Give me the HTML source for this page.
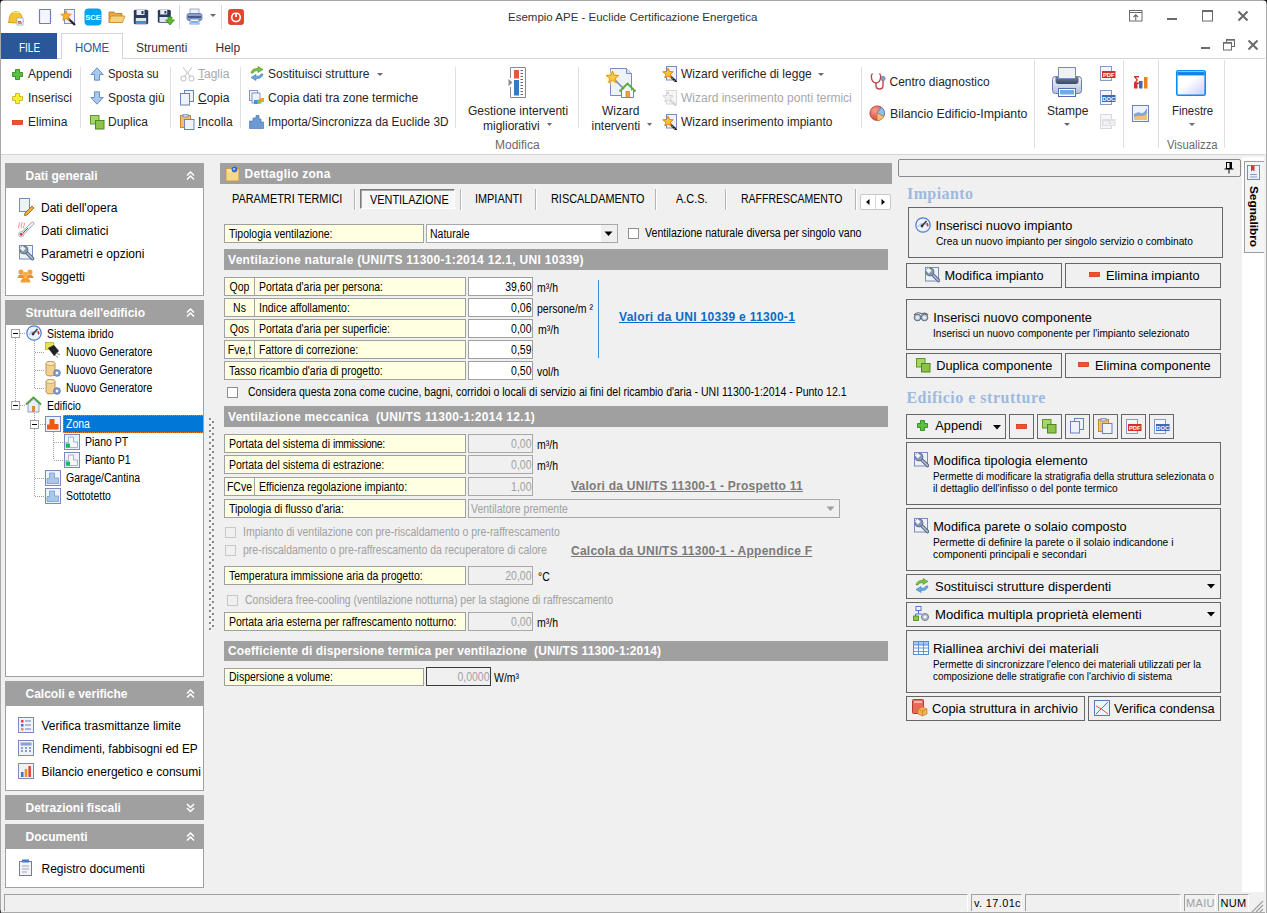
<!DOCTYPE html><html><head><meta charset="utf-8"><style>
html,body{margin:0;padding:0}
body{width:1267px;height:913px;overflow:hidden;position:relative;background:#f0f0f0;font-family:"Liberation Sans",sans-serif}
.a{position:absolute}
.t{white-space:nowrap}
</style></head><body>
<div class="a" style="left:0px;top:0px;width:1267px;height:154px;background:#fff"></div>
<div class="a" style="left:0px;top:0px;width:1267px;height:1px;background:#a8a8a8"></div>
<div class="a" style="left:0px;top:0px;width:1px;height:913px;background:#a8a8a8"></div>
<div class="a" style="left:1266px;top:0px;width:1px;height:913px;background:#a8a8a8"></div>
<svg class="a" style="left:0px;top:0px;" width="4" height="4" viewBox="0 0 4 4"><path d="M0 0H4Q0.5 0.5 0 4Z" fill="#111"/></svg>
<svg class="a" style="left:1263px;top:0px;" width="4" height="4" viewBox="0 0 4 4"><path d="M4 0H0Q3.5 0.5 4 4Z" fill="#111"/></svg>
<svg class="a" style="left:0px;top:909px;" width="4" height="4" viewBox="0 0 4 4"><path d="M0 4H4Q0.5 3.5 0 0Z" fill="#333"/></svg>
<svg class="a" style="left:7px;top:9px;" width="18" height="17" viewBox="0 0 18 17"><path d="M2 12 Q2 3 9 2.5 Q15 3 15.5 11 L16.5 12.5 Q9 15 1 13.5Z" fill="#f4c430" stroke="#c89a10" stroke-width="0.8"/><path d="M6 4 Q9 2 12 4" stroke="#fff2a0" fill="none"/><rect x="10" y="9" width="6" height="7" fill="#fff" stroke="#8aa" stroke-width="0.7"/><path d="M11 14 L15 14" stroke="#d33" stroke-width="1.2"/><path d="M11 12.5 L14 12.5" stroke="#3a3" stroke-width="1"/></svg>
<svg class="a" style="left:38px;top:8px;" width="14" height="17" viewBox="0 0 14 17"><rect x="1.5" y="1.5" width="11" height="14" fill="#f4f6fb" stroke="#6f7fb5" stroke-width="1.2" rx="0.5"/></svg>
<svg class="a" style="left:60px;top:8px;" width="17" height="18" viewBox="0 0 17 18"><rect x="4.5" y="1.5" width="10" height="14" fill="#eef1f8" stroke="#8090c0"/><path d="M7 9.5 L15 17" stroke="#222" stroke-width="2.2"/><path d="M6.00 2.50 L7.47 5.98 L11.23 6.30 L8.38 8.77 L9.23 12.45 L6.00 10.50 L2.77 12.45 L3.62 8.77 L0.77 6.30 L4.53 5.98Z" fill="#f6b233" stroke="#e0801a" stroke-width="0.8"/></svg>
<svg class="a" style="left:84px;top:8px;" width="18" height="18" viewBox="0 0 18 18"><rect x="0.5" y="0.5" width="17" height="17" rx="4" fill="#00a4ef"/><text x="9" y="12.3" font-family="Liberation Sans" font-weight="700" font-size="7.5" fill="#fff" text-anchor="middle">SCE</text></svg>
<svg class="a" style="left:108px;top:10px;" width="18" height="14" viewBox="0 0 18 14"><path d="M1 2 H6 L7.5 3.5 H14 V12.5 H1Z" fill="#e8a640" stroke="#b87420" stroke-width="0.8"/><path d="M3 6 H17 L14.5 12.5 H1Z" fill="#f7d27a" stroke="#c88a30" stroke-width="0.8"/></svg>
<svg class="a" style="left:133px;top:9px;" width="16" height="16" viewBox="0 0 16 16"><rect x="0.8" y="0.8" width="14.4" height="14.4" rx="1.5" fill="#2a3a58"/><rect x="3.5" y="1" width="8" height="5" fill="#e8ecf4"/><rect x="8.5" y="2" width="2" height="3" fill="#2a3a58"/><rect x="2.8" y="9" width="10.4" height="5.5" fill="#dfe6f2"/><rect x="2.8" y="12" width="10.4" height="2.5" fill="#4a8ad0"/></svg>
<svg class="a" style="left:157px;top:9px;" width="18" height="17" viewBox="0 0 18 17"><rect x="0.8" y="0.8" width="13" height="13" rx="1.5" fill="#2a3a58"/><rect x="3.2" y="1" width="7" height="4.5" fill="#e8ecf4"/><rect x="7.5" y="2" width="1.8" height="2.5" fill="#2a3a58"/><rect x="2.5" y="8" width="9.5" height="5" fill="#dfe6f2"/><path d="M11 8 H15 V11 H17.5 L13 16 L8.5 11 H11Z" fill="#5cb832" stroke="#3a8a20" stroke-width="0.7"/></svg>
<div class="a" style="left:179px;top:5px;width:1px;height:24px;background:#dadada"></div>
<svg class="a" style="left:186px;top:8px;" width="17" height="17" viewBox="0 0 17 17"><rect x="4" y="1" width="9" height="5" fill="#eef1f8" stroke="#8a9abf" stroke-width="0.8"/><rect x="1" y="5.5" width="15" height="7" rx="2" fill="#8a9ed0" stroke="#5a6ea0" stroke-width="0.8"/><rect x="2" y="8" width="13" height="2" fill="#48587e"/><rect x="4" y="11" width="9" height="5" fill="#eef3fb" stroke="#6a82b8" stroke-width="0.8"/><rect x="5" y="13" width="7" height="2" fill="#7ab0e8"/></svg>
<svg class="a" style="left:210px;top:14px;" width="6" height="4" viewBox="0 0 6 4"><path d="M0 0 H6 L3 3Z" fill="#6a6a6a"/></svg>
<div class="a" style="left:221px;top:5px;width:1px;height:24px;background:#dadada"></div>
<svg class="a" style="left:228px;top:9px;" width="16" height="16" viewBox="0 0 16 16"><rect x="0.5" y="0.5" width="15" height="15" rx="2" fill="#e8432a" stroke="#c03018" stroke-width="0.7"/><circle cx="8" cy="8.3" r="4.3" fill="none" stroke="#fff" stroke-width="1.6"/><rect x="7.1" y="3" width="1.8" height="5" fill="#fff"/><rect x="6.4" y="2" width="3.2" height="1.6" fill="#e8432a"/></svg>
<div class="a t" style="left:508px;top:10.70px;font-size:11.5px;line-height:13px;color:#333;font-weight:400;font-family:'Liberation Sans', sans-serif;">Esempio APE - Euclide Certificazione Energetica</div>
<svg class="a" style="left:1129px;top:10px;" width="14" height="12" viewBox="0 0 14 12"><rect x="0.5" y="0.5" width="12.5" height="10.5" fill="none" stroke="#6a6a6a"/><path d="M0.5 2.5 H13" stroke="#6a6a6a"/><path d="M6.75 10.5 V5 M4.5 7 L6.75 4.8 L9 7" stroke="#6a6a6a" fill="none" stroke-width="1.1"/></svg>
<div class="a" style="left:1167px;top:18px;width:10px;height:2px;background:#6a6a6a"></div>
<svg class="a" style="left:1202px;top:10px;" width="11" height="12" viewBox="0 0 11 12"><rect x="0.5" y="0.5" width="10" height="10.5" fill="none" stroke="#6a6a6a"/><rect x="0.5" y="0.5" width="10" height="1.5" fill="#6a6a6a"/></svg>
<svg class="a" style="left:1237px;top:10px;" width="12" height="12" viewBox="0 0 12 12"><path d="M1.5 1.5 L10.5 10.5 M10.5 1.5 L1.5 10.5" stroke="#6a6a6a" stroke-width="2"/></svg>
<div class="a" style="left:1201px;top:47px;width:9px;height:2px;background:#6a6a6a"></div>
<svg class="a" style="left:1223px;top:39px;" width="12" height="12" viewBox="0 0 12 12"><rect x="3.5" y="0.5" width="8" height="7" fill="#fff" stroke="#6a6a6a"/><rect x="3.5" y="0.5" width="8" height="1.2" fill="#6a6a6a"/><rect x="0.5" y="3.5" width="8" height="7.5" fill="#fff" stroke="#6a6a6a"/><rect x="0.5" y="3.5" width="8" height="1.2" fill="#6a6a6a"/></svg>
<svg class="a" style="left:1247px;top:39px;" width="12" height="12" viewBox="0 0 12 12"><path d="M1.5 1.5 L10.5 10.5 M10.5 1.5 L1.5 10.5" stroke="#6a6a6a" stroke-width="2"/></svg>
<div class="a" style="left:1px;top:58px;width:1264px;height:1px;background:#d5d5d5"></div>
<div class="a" style="left:1px;top:33px;width:56px;height:26px;background:#2b579a"></div>
<div class="a t" style="left:18.5px;top:41.03px;font-size:12px;line-height:14px;color:#fff;font-weight:400;font-family:'Liberation Sans', sans-serif;transform:scaleX(0.83);transform-origin:0 0;">FILE</div>
<div class="a" style="left:61px;top:33px;width:62px;height:26px;background:#fff;border:1px solid #d5d5d5;border-bottom:none;box-sizing:border-box"></div>
<div class="a t" style="left:75px;top:41.03px;font-size:12px;line-height:14px;color:#2b579a;font-weight:400;font-family:'Liberation Sans', sans-serif;transform:scaleX(0.95);transform-origin:0 0;">HOME</div>
<div class="a t" style="left:136px;top:41.03px;font-size:12px;line-height:14px;color:#333;font-weight:400;font-family:'Liberation Sans', sans-serif;">Strumenti</div>
<div class="a t" style="left:215.5px;top:41.03px;font-size:12px;line-height:14px;color:#333;font-weight:400;font-family:'Liberation Sans', sans-serif;">Help</div>
<div class="a" style="left:1px;top:154px;width:1264px;height:1px;background:#d5d5d5"></div>
<div class="a" style="left:80px;top:67px;width:1px;height:61px;background:#e1e1e1"></div>
<div class="a" style="left:170px;top:67px;width:1px;height:61px;background:#e1e1e1"></div>
<div class="a" style="left:240px;top:67px;width:1px;height:61px;background:#e1e1e1"></div>
<div class="a" style="left:455px;top:67px;width:1px;height:61px;background:#e1e1e1"></div>
<div class="a" style="left:578px;top:67px;width:1px;height:61px;background:#e1e1e1"></div>
<div class="a" style="left:861px;top:67px;width:1px;height:61px;background:#e1e1e1"></div>
<div class="a" style="left:1034px;top:60px;width:1px;height:88px;background:#e1e1e1"></div>
<div class="a" style="left:1123px;top:60px;width:1px;height:88px;background:#e1e1e1"></div>
<div class="a" style="left:1158px;top:60px;width:1px;height:88px;background:#e1e1e1"></div>
<div class="a" style="left:1224px;top:60px;width:1px;height:88px;background:#e1e1e1"></div>
<svg class="a" style="left:12px;top:69px;" width="11" height="11" viewBox="0 0 11 11"><path d="M3.5 0.5 H7.5 V3.5 H10.5 V7.5 H7.5 V10.5 H3.5 V7.5 H0.5 V3.5 H3.5Z" fill="#5ac23a" stroke="#2e8a1e" stroke-width="0.9"/></svg>
<div class="a t" style="left:28px;top:67.03px;font-size:12px;line-height:14px;color:#262626;font-weight:400;font-family:'Liberation Sans', sans-serif;">Appendi</div>
<svg class="a" style="left:12px;top:93px;" width="11" height="11" viewBox="0 0 11 11"><path d="M3.5 0.5 H7.5 V3.5 H10.5 V7.5 H7.5 V10.5 H3.5 V7.5 H0.5 V3.5 H3.5Z" fill="#f8ee30" stroke="#c8b820" stroke-width="0.9"/></svg>
<div class="a t" style="left:28px;top:91.03px;font-size:12px;line-height:14px;color:#262626;font-weight:400;font-family:'Liberation Sans', sans-serif;">Inserisci</div>
<svg class="a" style="left:12px;top:120px;" width="11" height="5" viewBox="0 0 11 5"><rect x="0.5" y="0.5" width="10" height="4" fill="#f0502a" stroke="#d83818" stroke-width="0.8"/></svg>
<div class="a t" style="left:28px;top:115.03px;font-size:12px;line-height:14px;color:#262626;font-weight:400;font-family:'Liberation Sans', sans-serif;">Elimina</div>
<svg class="a" style="left:90px;top:67px;" width="14" height="14" viewBox="0 0 14 14"><path d="M7 0.8 L13.2 7.5 H9.5 V13.2 H4.5 V7.5 H0.8Z" fill="#a8c8ec" stroke="#5a8ac8" stroke-width="0.9"/></svg>
<div class="a t" style="left:108px;top:67.03px;font-size:12px;line-height:14px;color:#262626;font-weight:400;font-family:'Liberation Sans', sans-serif;transform:scaleX(0.95);transform-origin:0 0;">Sposta su</div>
<svg class="a" style="left:90px;top:91px;" width="14" height="14" viewBox="0 0 14 14"><path d="M7 13.2 L13.2 6.5 H9.5 V0.8 H4.5 V6.5 H0.8Z" fill="#a8c8ec" stroke="#5a8ac8" stroke-width="0.9"/></svg>
<div class="a t" style="left:108px;top:91.03px;font-size:12px;line-height:14px;color:#262626;font-weight:400;font-family:'Liberation Sans', sans-serif;">Sposta giù</div>
<svg class="a" style="left:90px;top:115px;" width="15" height="15" viewBox="0 0 15 15"><rect x="0.5" y="0.5" width="8.5" height="8.5" fill="#a8d468" stroke="#5a9a2a"/><rect x="5.5" y="5.5" width="8.5" height="8.5" fill="#8cc24a" stroke="#4a8a1a"/></svg>
<div class="a t" style="left:108px;top:115.03px;font-size:12px;line-height:14px;color:#262626;font-weight:400;font-family:'Liberation Sans', sans-serif;">Duplica</div>
<svg class="a" style="left:180px;top:67px;" width="15" height="15" viewBox="0 0 15 15"><circle cx="3.5" cy="11.5" r="2.5" fill="none" stroke="#c8c8c8" stroke-width="1.1"/><circle cx="11.5" cy="11.5" r="2.5" fill="none" stroke="#c8c8c8" stroke-width="1.1"/><path d="M4.5 9.5 L12 0.5 M10.5 9.5 L3 0.5" stroke="#c8c8c8" stroke-width="1.1"/></svg>
<div class="a t" style="left:198px;top:67.03px;font-size:12px;line-height:14px;color:#a8a8a8;font-weight:400;font-family:'Liberation Sans', sans-serif;"><u>T</u>aglia</div>
<svg class="a" style="left:180px;top:90px;" width="15" height="16" viewBox="0 0 15 16"><rect x="4.5" y="0.5" width="9" height="11" fill="#eef2fa" stroke="#6a82c0"/><rect x="0.5" y="3.5" width="9" height="11.5" fill="#eef2fa" stroke="#6a82c0"/></svg>
<div class="a t" style="left:198px;top:91.03px;font-size:12px;line-height:14px;color:#262626;font-weight:400;font-family:'Liberation Sans', sans-serif;"><u>C</u>opia</div>
<svg class="a" style="left:180px;top:114px;" width="15" height="16" viewBox="0 0 15 16"><rect x="0.5" y="1.5" width="10" height="12" fill="#f0c070" stroke="#c08a30"/><rect x="3" y="0.5" width="5" height="2.5" fill="#d8dce8" stroke="#7a8ab0" stroke-width="0.8"/><rect x="4.5" y="5.5" width="9.5" height="10" fill="#eef2fa" stroke="#6a82c0"/></svg>
<div class="a t" style="left:198px;top:115.03px;font-size:12px;line-height:14px;color:#262626;font-weight:400;font-family:'Liberation Sans', sans-serif;"><u>I</u>ncolla</div>
<svg class="a" style="left:249px;top:66px;" width="16" height="15" viewBox="0 0 16 15"><path d="M2 7 Q3 2 9 2.5 L9 0.5 L14 3.5 L9 6.5 L9 4.5 Q5 4.5 4 7Z" fill="#7ac240" stroke="#4a9020" stroke-width="0.6"/><path d="M14 8 Q13 13 7 12.5 L7 14.5 L2 11.5 L7 8.5 L7 10.5 Q11 10.5 12 8Z" fill="#6aa8e0" stroke="#3a78c0" stroke-width="0.6"/></svg>
<div class="a t" style="left:268px;top:67.03px;font-size:12px;line-height:14px;color:#262626;font-weight:400;font-family:'Liberation Sans', sans-serif;">Sostituisci strutture</div>
<svg class="a" style="left:377px;top:73px;" width="6" height="4" viewBox="0 0 6 4"><path d="M0 0 H6 L3 3Z" fill="#6a6a6a"/></svg>
<svg class="a" style="left:249px;top:90px;" width="16" height="16" viewBox="0 0 16 16"><rect x="0.5" y="0.5" width="8" height="10" fill="#eef2fa" stroke="#7a8ac0" stroke-width="0.9"/><rect x="3" y="3" width="8" height="10" fill="#eef2fa" stroke="#7a8ac0" stroke-width="0.9"/><rect x="5" y="10" width="4" height="4" fill="#4a90e0"/><rect x="8.5" y="9.5" width="4" height="4" fill="#8cc040"/><rect x="11" y="8" width="4" height="4" fill="#f0a030"/></svg>
<div class="a t" style="left:268px;top:91.03px;font-size:12px;line-height:14px;color:#262626;font-weight:400;font-family:'Liberation Sans', sans-serif;">Copia dati tra zone termiche</div>
<svg class="a" style="left:249px;top:114px;" width="15" height="15" viewBox="0 0 15 15"><path d="M0.5 14.5 V7 H4 V4 H7 V1.5 H10 V5 H12 V8 H14.5 V14.5Z" fill="#6a9ad0" stroke="#4a7ab8" stroke-width="0.7"/></svg>
<div class="a t" style="left:268px;top:115.03px;font-size:12px;line-height:14px;color:#262626;font-weight:400;font-family:'Liberation Sans', sans-serif;transform:scaleX(0.98);transform-origin:0 0;">Importa/Sincronizza da Euclide 3D</div>
<svg class="a" style="left:508px;top:66px;" width="20" height="33" viewBox="0 0 20 33"><path d="M2.5 12 V1.5 H17.5 V31.5 H2.5 V21" fill="#fff" stroke="#8a8a8a"/><rect x="6" y="4" width="5" height="8.5" fill="#e05a3a"/><rect x="6" y="14" width="5" height="15.5" fill="#3a78c0"/><path d="M12.5 4.5 H15 M12.5 7.5 H15 M12.5 10.5 H15 M12.5 13.5 H15 M12.5 16.5 H15 M12.5 19.5 H15 M12.5 22.5 H15 M12.5 25.5 H15 M12.5 28.5 H15" stroke="#555" stroke-width="0.9"/><path d="M0.5 13 L4.5 16.5 L0.5 20Z" fill="#8a8a8a"/></svg>
<div class="a t" style="left:468px;top:104.03px;font-size:12px;line-height:14px;color:#262626;font-weight:400;font-family:'Liberation Sans', sans-serif;">Gestione interventi</div>
<div class="a t" style="left:483px;top:118.53px;font-size:12px;line-height:14px;color:#262626;font-weight:400;font-family:'Liberation Sans', sans-serif;">migliorativi</div>
<svg class="a" style="left:547px;top:123px;" width="5" height="3" viewBox="0 0 5 3"><path d="M0 0 H5 L2.5 3Z" fill="#6a6a6a"/></svg>
<svg class="a" style="left:602px;top:66px;" width="36" height="33" viewBox="0 0 36 33"><defs><radialGradient id="glow"><stop offset="0.3" stop-color="#fff3a0" stop-opacity="0.9"/><stop offset="1" stop-color="#fff3a0" stop-opacity="0"/></radialGradient></defs><path d="M8.5 2.5 H24.5 L29.5 7.5 V29.5 H8.5Z" fill="#eef2fa" stroke="#7a8ac0"/><path d="M24.5 2.5 V7.5 H29.5" fill="#dde4f4" stroke="#7a8ac0"/><circle cx="10.5" cy="11.5" r="9" fill="url(#glow)"/><path d="M13 14 L22 23" stroke="#7a8ab8" stroke-width="1.6"/><path d="M10.50 5.00 L12.15 9.23 L16.68 9.49 L13.16 12.37 L14.32 16.76 L10.50 14.30 L6.68 16.76 L7.84 12.37 L4.32 9.49 L8.85 9.23Z" fill="#f8c848" stroke="#e08820" stroke-width="0.9"/><path d="M19.5 24.5 V31.5 H31.5 V24.5" fill="#fff" stroke="#6a82c0"/><path d="M17.5 25.5 L25.5 17.5 L33.5 25.5" fill="none" stroke="#58a838" stroke-width="1.8"/><rect x="24" y="25.5" width="3.5" height="6" fill="#f0a040" stroke="#c07020" stroke-width="0.6"/></svg>
<div class="a t" style="left:602px;top:104.03px;font-size:12px;line-height:14px;color:#262626;font-weight:400;font-family:'Liberation Sans', sans-serif;">Wizard</div>
<div class="a t" style="left:591.5px;top:118.53px;font-size:12px;line-height:14px;color:#262626;font-weight:400;font-family:'Liberation Sans', sans-serif;">interventi</div>
<svg class="a" style="left:647px;top:123px;" width="5" height="3" viewBox="0 0 5 3"><path d="M0 0 H5 L2.5 3Z" fill="#6a6a6a"/></svg>
<svg class="a" style="left:662px;top:66px;" width="16" height="16" viewBox="0 0 16 16"><rect x="4.5" y="0.5" width="10" height="13.5" fill="#eef2fa" stroke="#7a8ac0"/><path d="M7 9 L14.5 16" stroke="#222" stroke-width="2.2"/><path d="M8 10 L9 11 M10 12 L11 13 M12 14 L13 15" stroke="#999" stroke-width="0.8"/><path d="M6.00 2.00 L7.47 5.48 L11.23 5.80 L8.38 8.27 L9.23 11.95 L6.00 10.00 L2.77 11.95 L3.62 8.27 L0.77 5.80 L4.53 5.48Z" fill="#f6c038" stroke="#e07818" stroke-width="0.9"/></svg>
<div class="a t" style="left:681px;top:67.03px;font-size:12px;line-height:14px;color:#262626;font-weight:400;font-family:'Liberation Sans', sans-serif;">Wizard verifiche di legge</div>
<svg class="a" style="left:818px;top:73px;" width="6" height="4" viewBox="0 0 6 4"><path d="M0 0 H6 L3 3Z" fill="#6a6a6a"/></svg>
<svg class="a" style="left:662px;top:90px;" width="16" height="16" viewBox="0 0 16 16"><rect x="4.5" y="0.5" width="10" height="13.5" fill="#f6f6f6" stroke="#dadada"/><path d="M7 9 L14.5 16" stroke="#d4d4d4" stroke-width="2.2"/><path d="M6.00 2.00 L7.47 5.48 L11.23 5.80 L8.38 8.27 L9.23 11.95 L6.00 10.00 L2.77 11.95 L3.62 8.27 L0.77 5.80 L4.53 5.48Z" fill="#f0f0f0" stroke="#d0d0d0" stroke-width="0.9"/></svg>
<div class="a t" style="left:681px;top:91.03px;font-size:12px;line-height:14px;color:#a8a8a8;font-weight:400;font-family:'Liberation Sans', sans-serif;">Wizard inserimento ponti termici</div>
<svg class="a" style="left:662px;top:114px;" width="16" height="16" viewBox="0 0 16 16"><rect x="4.5" y="0.5" width="10" height="13.5" fill="#eef2fa" stroke="#7a8ac0"/><path d="M7 9 L14.5 16" stroke="#222" stroke-width="2.2"/><path d="M8 10 L9 11 M10 12 L11 13 M12 14 L13 15" stroke="#999" stroke-width="0.8"/><path d="M6.00 2.00 L7.47 5.48 L11.23 5.80 L8.38 8.27 L9.23 11.95 L6.00 10.00 L2.77 11.95 L3.62 8.27 L0.77 5.80 L4.53 5.48Z" fill="#f6c038" stroke="#e07818" stroke-width="0.9"/></svg>
<div class="a t" style="left:681px;top:115.03px;font-size:12px;line-height:14px;color:#262626;font-weight:400;font-family:'Liberation Sans', sans-serif;">Wizard inserimento impianto</div>
<svg class="a" style="left:870px;top:73px;" width="17" height="17" viewBox="0 0 17 17"><path d="M2.5 1 Q1 1 1.5 5 Q2 9.5 6 10 Q10 9.5 10.5 5 Q11 1 9.5 1" fill="none" stroke="#c04848" stroke-width="1.4"/><path d="M6 10 V12.5 Q6 16 9.5 16 Q13 16 13 12.5 V7.5" fill="none" stroke="#c04848" stroke-width="1.4"/><circle cx="13" cy="5.5" r="2.2" fill="#8aa0c0" stroke="#5a6a88" stroke-width="0.6"/><circle cx="2.5" cy="1.2" r="0.9" fill="#9ab"/><circle cx="9.5" cy="1.2" r="0.9" fill="#9ab"/></svg>
<div class="a t" style="left:889.5px;top:75.03px;font-size:12px;line-height:14px;color:#262626;font-weight:400;font-family:'Liberation Sans', sans-serif;">Centro diagnostico</div>
<svg class="a" style="left:869px;top:105px;" width="17" height="17" viewBox="0 0 17 17"><defs><radialGradient id="pier" cx="0.35" cy="0.3" r="0.8"><stop offset="0" stop-color="#f4a090"/><stop offset="1" stop-color="#d03a30"/></radialGradient></defs><circle cx="8.2" cy="8.2" r="7.3" fill="url(#pier)" stroke="#b83028" stroke-width="0.8"/><path d="M8.2 8.2 L12.39 2.22 A7.3 7.3 0 0 1 14.82 11.29Z" fill="#8cc0ec" stroke="#3a78c8" stroke-width="0.6"/><path d="M8.2 8.2 L14.82 11.29 A7.3 7.3 0 0 1 8.2 15.5Z" fill="#f4c070" stroke="#c88030" stroke-width="0.6"/></svg>
<div class="a t" style="left:889.5px;top:107.03px;font-size:12px;line-height:14px;color:#262626;font-weight:400;font-family:'Liberation Sans', sans-serif;transform:scaleX(1.025);transform-origin:0 0;">Bilancio Edificio-Impianto</div>
<svg class="a" style="left:1050px;top:66px;" width="34" height="32" viewBox="0 0 34 32"><defs><linearGradient id="pbody" x1="0" y1="0" x2="0" y2="1"><stop offset="0" stop-color="#f4f6fb"/><stop offset="1" stop-color="#b4c0da"/></linearGradient><linearGradient id="pslot" x1="0" y1="0" x2="0" y2="1"><stop offset="0" stop-color="#7a88a8"/><stop offset="1" stop-color="#3a4868"/></linearGradient></defs><rect x="2.5" y="10.5" width="29" height="17" rx="3" fill="url(#pbody)" stroke="#6a7ab0"/><path d="M5.5 10 H28.5 V15 Q28.5 18 25.5 18 H8.5 Q5.5 18 5.5 15Z" fill="url(#pslot)"/><rect x="8.5" y="1.5" width="17" height="11" fill="#eef1f8" stroke="#7a8ac0"/><rect x="8.5" y="22.5" width="17" height="8" fill="#fff" stroke="#5a6aa8"/><rect x="10" y="24" width="14" height="4.5" fill="#6aaee8"/></svg>
<div class="a t" style="left:1047px;top:104.03px;font-size:12px;line-height:14px;color:#262626;font-weight:400;font-family:'Liberation Sans', sans-serif;">Stampe</div>
<svg class="a" style="left:1064px;top:123px;" width="6" height="4" viewBox="0 0 6 4"><path d="M0 0 H6 L3 3Z" fill="#6a6a6a"/></svg>
<svg class="a" style="left:1100px;top:66px;" width="16" height="15" viewBox="0 0 16 15"><rect x="0.5" y="0.5" width="11" height="14" fill="#f4f6fb" stroke="#8a9ac8"/><rect x="2" y="5" width="13.5" height="7" fill="#d03030"/><text x="8.7" y="10.8" font-family="Liberation Sans" font-weight="700" font-size="5.8" fill="#fff" text-anchor="middle">PDF</text></svg>
<svg class="a" style="left:1100px;top:90px;" width="16" height="15" viewBox="0 0 16 15"><rect x="0.5" y="0.5" width="11" height="14" fill="#f4f6fb" stroke="#8a9ac8"/><rect x="2" y="5" width="13.5" height="7" fill="#3a6ab8"/><text x="8.7" y="10.8" font-family="Liberation Sans" font-weight="700" font-size="5.8" fill="#fff" text-anchor="middle">DOC</text></svg>
<svg class="a" style="left:1100px;top:114px;" width="16" height="15" viewBox="0 0 16 15"><rect x="0.5" y="0.5" width="11" height="14" fill="#f4f6fb" stroke="#d8d8d8"/><rect x="2" y="5" width="13.5" height="7" fill="#e0e0e0"/><text x="8.7" y="10.8" font-family="Liberation Sans" font-weight="700" font-size="5.8" fill="#fff" text-anchor="middle">XLS</text></svg>
<svg class="a" style="left:1133px;top:75px;" width="16" height="14" viewBox="0 0 16 14"><path d="M1 1 H6 V2.5 H3 L5 5 L3 7.5 H6 V9 H1 V8 L3.5 5 L1 2 Z" fill="#d03030"/><rect x="1" y="7.5" width="3.5" height="6" fill="#d03030"/><rect x="6" y="6" width="3.5" height="7.5" fill="#3a6ab8"/><rect x="11" y="2" width="3.5" height="11.5" fill="#f0801a"/></svg>
<svg class="a" style="left:1132px;top:105px;" width="17" height="17" viewBox="0 0 17 17"><rect x="0.5" y="0.5" width="16" height="16" fill="#eef2fa" stroke="#6a82b8"/><path d="M2 15 V9 Q6 6 9 8 Q12 9 15 3 V15Z" fill="#7aa8e0"/><path d="M2 15 V12 Q7 10 10 11 Q13 11 15 8 V15Z" fill="#f4c078"/></svg>
<svg class="a" style="left:1176px;top:70px;" width="30" height="26" viewBox="0 0 30 26"><defs><linearGradient id="fwin" x1="0.2" y1="0.2" x2="1" y2="1"><stop offset="0.3" stop-color="#ffffff"/><stop offset="1" stop-color="#cccaff"/></linearGradient></defs><rect x="0.8" y="0.8" width="28.4" height="24.4" rx="1.5" fill="url(#fwin)" stroke="#0a8cf8" stroke-width="1.6"/><rect x="1.5" y="1.8" width="27" height="3.6" fill="#0a84ee"/><path d="M2 1.6 H28" stroke="#9ccaf8" stroke-width="0.8"/></svg>
<div class="a t" style="left:1171.5px;top:104.03px;font-size:12px;line-height:14px;color:#262626;font-weight:400;font-family:'Liberation Sans', sans-serif;transform:scaleX(0.95);transform-origin:0 0;">Finestre</div>
<svg class="a" style="left:1189px;top:123px;" width="6" height="4" viewBox="0 0 6 4"><path d="M0 0 H6 L3 3Z" fill="#6a6a6a"/></svg>
<div class="a t" style="left:495px;top:137.53px;font-size:12px;line-height:14px;color:#6a6a6a;font-weight:400;font-family:'Liberation Sans', sans-serif;">Modifica</div>
<div class="a t" style="left:1166.5px;top:137.53px;font-size:12px;line-height:14px;color:#6a6a6a;font-weight:400;font-family:'Liberation Sans', sans-serif;transform:scaleX(0.94);transform-origin:0 0;">Visualizza</div>
<div class="a" style="left:5px;top:163px;width:199px;height:25px;background:#a0a0a0"></div>
<div class="a t" style="left:25.5px;top:169.03px;font-size:12px;line-height:14px;color:#fff;font-weight:700;font-family:'Liberation Sans', sans-serif;">Dati generali</div>
<svg class="a" style="left:186px;top:171px;" width="9" height="9" viewBox="0 0 9 9"><path d="M1 4.5 L4.5 1 L8 4.5 M1 8.5 L4.5 5 L8 8.5" stroke="#fff" stroke-width="1.5" fill="none"/></svg>
<div class="a" style="left:5px;top:188px;width:199px;height:108px;background:#fff;border:1px solid #a0a0a0;border-top:none;box-sizing:border-box"></div>
<svg class="a" style="left:17px;top:198px;" width="18" height="18" viewBox="0 0 18 18"><rect x="2.5" y="0.5" width="10" height="13" fill="#eef2fa" stroke="#7a8ac0"/><path d="M8 15 L15 8 L17 10 L10 17 L7.5 17.5Z" fill="#f0b040" stroke="#806020" stroke-width="0.8"/></svg>
<div class="a t" style="left:41px;top:201.03px;font-size:12px;line-height:14px;color:#000;font-weight:400;font-family:'Liberation Sans', sans-serif;">Dati dell'opera</div>
<svg class="a" style="left:17px;top:221px;" width="18" height="17" viewBox="0 0 18 17"><path d="M4.5 13.5 L15.5 2.5" stroke="#9aa4b4" stroke-width="3.6" stroke-linecap="round"/><path d="M4.5 13.5 L15.5 2.5" stroke="#f4f4f8" stroke-width="2" stroke-linecap="round"/><path d="M4.5 13.5 L11 7" stroke="#e02838" stroke-width="1"/><circle cx="4.2" cy="13.3" r="2.6" fill="#f4f4f8" stroke="#9aa4b4" stroke-width="0.8"/><circle cx="4.2" cy="13.3" r="1.4" fill="#e02838"/><path d="M2 1.5 Q3 3 2 4.5 Q1 6 2 7.5 M4.5 1 Q5.5 2.5 4.5 4 Q3.5 5.5 4.5 7 M7 1.5 Q8 3 7 4.5 Q6 6 7 7.5" stroke="#f06070" stroke-width="0.7" fill="none"/></svg>
<div class="a t" style="left:41px;top:224.03px;font-size:12px;line-height:14px;color:#000;font-weight:400;font-family:'Liberation Sans', sans-serif;">Dati climatici</div>
<svg class="a" style="left:18px;top:244px;" width="17" height="17" viewBox="0 0 17 17"><rect x="1.5" y="1.5" width="13" height="13.5" fill="#eef2fa" stroke="#7a8ac0"/><path d="M6.5 6.5 L14.5 14.5" stroke="#56667f" stroke-width="3.6" stroke-linecap="round"/><path d="M6.5 6.5 L14.5 14.5" stroke="#b8c6dc" stroke-width="1.5" stroke-linecap="round"/><circle cx="6" cy="6" r="4" fill="#8898b4" stroke="#56667f" stroke-width="0.8"/><path d="M1.8 4.6 L4.6 1.8 L7.6 4.8 L4.8 7.6Z" fill="#eef2fa"/></svg>
<div class="a t" style="left:41px;top:247.03px;font-size:12px;line-height:14px;color:#000;font-weight:400;font-family:'Liberation Sans', sans-serif;">Parametri e opzioni</div>
<svg class="a" style="left:17px;top:268px;" width="17" height="15" viewBox="0 0 17 15"><circle cx="4" cy="4" r="2.5" fill="#f0a040"/><circle cx="13" cy="4" r="2.5" fill="#f0a040"/><path d="M0.5 10 Q1 6.5 4 6.5 Q7 6.5 7.5 10Z" fill="#e89030"/><path d="M9.5 10 Q10 6.5 13 6.5 Q16 6.5 16.5 10Z" fill="#e89030"/><circle cx="8.5" cy="6.5" r="2.8" fill="#f4b050"/><path d="M3.5 14.5 Q4 9.5 8.5 9.5 Q13 9.5 13.5 14.5Z" fill="#f0a030"/></svg>
<div class="a t" style="left:41px;top:270.03px;font-size:12px;line-height:14px;color:#000;font-weight:400;font-family:'Liberation Sans', sans-serif;">Soggetti</div>
<div class="a" style="left:5px;top:300px;width:199px;height:25px;background:#a0a0a0"></div>
<div class="a t" style="left:25.5px;top:306.03px;font-size:12px;line-height:14px;color:#fff;font-weight:700;font-family:'Liberation Sans', sans-serif;">Struttura dell'edificio</div>
<svg class="a" style="left:186px;top:308px;" width="9" height="9" viewBox="0 0 9 9"><path d="M1 4.5 L4.5 1 L8 4.5 M1 8.5 L4.5 5 L8 8.5" stroke="#fff" stroke-width="1.5" fill="none"/></svg>
<div class="a" style="left:5px;top:325px;width:199px;height:352px;background:#fff;border:1px solid #a0a0a0;border-top:none;box-sizing:border-box"></div>
<div class="a" style="left:15px;top:338px;width:1px;height:68px;background:repeating-linear-gradient(to bottom,#a0a0a0 0 1px,transparent 1px 2px)"></div>
<div class="a" style="left:20px;top:333px;width:6px;height:1px;background:repeating-linear-gradient(to right,#a0a0a0 0 1px,transparent 1px 2px)"></div>
<svg class="a" style="left:11px;top:329px;" width="9" height="9" viewBox="0 0 9 9"><rect x="0.5" y="0.5" width="8" height="8" fill="#fff" stroke="#a0a0a0"/><path d="M2 4.5 H7" stroke="#000"/></svg>
<svg class="a" style="left:26px;top:325px;" width="16" height="16" viewBox="0 0 16 16"><circle cx="8" cy="8" r="7.2" fill="#eaf2fc" stroke="#4a7ad0" stroke-width="1.2"/><path d="M3 10 A5.3 5.3 0 0 1 13 10" fill="none" stroke="#9ab8e8" stroke-width="1"/><path d="M7 9 L11.5 4" stroke="#333" stroke-width="1.4"/><circle cx="7" cy="9" r="1.4" fill="#333"/><path d="M12 6 L13 9" stroke="#e03030" stroke-width="1.6"/></svg>
<div class="a t" style="left:46.5px;top:327.03px;font-size:12px;line-height:14px;color:#000;font-weight:400;font-family:'Liberation Sans', sans-serif;transform:scaleX(0.875);transform-origin:0 0;">Sistema ibrido</div>
<div class="a" style="left:34px;top:341px;width:1px;height:47px;background:repeating-linear-gradient(to bottom,#a0a0a0 0 1px,transparent 1px 2px)"></div>
<div class="a" style="left:35px;top:352px;width:10px;height:1px;background:repeating-linear-gradient(to right,#a0a0a0 0 1px,transparent 1px 2px)"></div>
<div class="a" style="left:35px;top:370px;width:10px;height:1px;background:repeating-linear-gradient(to right,#a0a0a0 0 1px,transparent 1px 2px)"></div>
<div class="a" style="left:35px;top:388px;width:10px;height:1px;background:repeating-linear-gradient(to right,#a0a0a0 0 1px,transparent 1px 2px)"></div>
<svg class="a" style="left:45px;top:342px;" width="17" height="16" viewBox="0 0 17 16"><rect x="0.5" y="0.5" width="8" height="7" fill="#e8e050" stroke="#b0a830" stroke-width="0.7"/><path d="M3 6 L9 3 L14 9 L9 14 Z" fill="#222"/><path d="M11 11 L15 13 M10 13 L13 15.5" stroke="#888" stroke-width="1"/></svg>
<div class="a t" style="left:65.5px;top:345.03px;font-size:12px;line-height:14px;color:#000;font-weight:400;font-family:'Liberation Sans', sans-serif;transform:scaleX(0.875);transform-origin:0 0;">Nuovo Generatore</div>
<svg class="a" style="left:45px;top:361px;" width="16" height="16" viewBox="0 0 16 16"><path d="M1 2.5 Q1 0.5 5.5 0.5 Q10 0.5 10 2.5 V13 Q10 15 5.5 15 Q1 15 1 13Z" fill="#f4d090" stroke="#b08040" stroke-width="0.8"/><ellipse cx="5.5" cy="2.5" rx="4.5" ry="2" fill="#fbe8b8" stroke="#b08040" stroke-width="0.6"/><circle cx="12" cy="12" r="3.3" fill="#8aa8d8" stroke="#4a68a8" stroke-width="0.8"/><circle cx="12" cy="12" r="1.2" fill="#fff"/></svg>
<div class="a t" style="left:65.5px;top:363.03px;font-size:12px;line-height:14px;color:#000;font-weight:400;font-family:'Liberation Sans', sans-serif;transform:scaleX(0.875);transform-origin:0 0;">Nuovo Generatore</div>
<svg class="a" style="left:45px;top:379px;" width="16" height="16" viewBox="0 0 16 16"><path d="M1 2.5 Q1 0.5 5.5 0.5 Q10 0.5 10 2.5 V13 Q10 15 5.5 15 Q1 15 1 13Z" fill="#f4d090" stroke="#b08040" stroke-width="0.8"/><ellipse cx="5.5" cy="2.5" rx="4.5" ry="2" fill="#fbe8b8" stroke="#b08040" stroke-width="0.6"/><circle cx="12" cy="12" r="3.3" fill="#8aa8d8" stroke="#4a68a8" stroke-width="0.8"/><circle cx="12" cy="12" r="1.2" fill="#fff"/></svg>
<div class="a t" style="left:65.5px;top:381.03px;font-size:12px;line-height:14px;color:#000;font-weight:400;font-family:'Liberation Sans', sans-serif;transform:scaleX(0.875);transform-origin:0 0;">Nuovo Generatore</div>
<div class="a" style="left:20px;top:405px;width:6px;height:1px;background:repeating-linear-gradient(to right,#a0a0a0 0 1px,transparent 1px 2px)"></div>
<svg class="a" style="left:11px;top:401px;" width="9" height="9" viewBox="0 0 9 9"><rect x="0.5" y="0.5" width="8" height="8" fill="#fff" stroke="#a0a0a0"/><path d="M2 4.5 H7" stroke="#000"/></svg>
<svg class="a" style="left:25px;top:396px;" width="17" height="17" viewBox="0 0 17 17"><path d="M1 8.5 L8.5 1.5 L16 8.5" fill="none" stroke="#4aa030" stroke-width="1.8"/><path d="M3 8 L8.5 3 L14 8 V16 H3Z" fill="#e8eef8" stroke="#7a8ac0" stroke-width="0.8"/><rect x="7" y="10" width="3" height="6" fill="#e88a2a"/></svg>
<div class="a t" style="left:46.5px;top:399.03px;font-size:12px;line-height:14px;color:#000;font-weight:400;font-family:'Liberation Sans', sans-serif;transform:scaleX(0.875);transform-origin:0 0;">Edificio</div>
<div class="a" style="left:34px;top:413px;width:1px;height:83px;background:repeating-linear-gradient(to bottom,#a0a0a0 0 1px,transparent 1px 2px)"></div>
<div class="a" style="left:38px;top:424px;width:7px;height:1px;background:repeating-linear-gradient(to right,#a0a0a0 0 1px,transparent 1px 2px)"></div>
<svg class="a" style="left:30px;top:420px;" width="9" height="9" viewBox="0 0 9 9"><rect x="0.5" y="0.5" width="8" height="8" fill="#fff" stroke="#a0a0a0"/><path d="M2 4.5 H7" stroke="#000"/></svg>
<svg class="a" style="left:45px;top:416px;" width="16" height="16" viewBox="0 0 16 16"><rect x="0.5" y="0.5" width="15" height="15" fill="#eef2fa" stroke="#7a8ac0"/><path d="M2 13.5 V8.5 H4.5 V3 H9.5 V8 H13.5 V13.5Z" fill="#f05a10"/></svg>
<div class="a" style="left:63px;top:415px;width:140px;height:18px;background:#0078d7;border:1px dotted #f08020;border-right:none;box-sizing:border-box"></div>
<div class="a t" style="left:66px;top:417.03px;font-size:12px;line-height:14px;color:#fff;font-weight:400;font-family:'Liberation Sans', sans-serif;transform:scaleX(0.875);transform-origin:0 0;">Zona</div>
<div class="a" style="left:53px;top:432px;width:1px;height:28px;background:repeating-linear-gradient(to bottom,#a0a0a0 0 1px,transparent 1px 2px)"></div>
<div class="a" style="left:54px;top:442px;width:10px;height:1px;background:repeating-linear-gradient(to right,#a0a0a0 0 1px,transparent 1px 2px)"></div>
<div class="a" style="left:54px;top:460px;width:10px;height:1px;background:repeating-linear-gradient(to right,#a0a0a0 0 1px,transparent 1px 2px)"></div>
<svg class="a" style="left:64px;top:434px;" width="16" height="16" viewBox="0 0 16 16"><rect x="0.5" y="0.5" width="15" height="15" fill="#eef2fa" stroke="#7a8ac0"/><path d="M2 13.5 V8.5 H4.5 V3 H9.5 V8 H13.5 V13.5Z" fill="#f4f6fa" stroke="#8a9ac0" stroke-width="0.7"/><rect x="2" y="9.5" width="4" height="4" fill="#10c060"/></svg>
<div class="a t" style="left:84.5px;top:435.03px;font-size:12px;line-height:14px;color:#000;font-weight:400;font-family:'Liberation Sans', sans-serif;transform:scaleX(0.875);transform-origin:0 0;">Piano PT</div>
<svg class="a" style="left:64px;top:452px;" width="16" height="16" viewBox="0 0 16 16"><rect x="0.5" y="0.5" width="15" height="15" fill="#eef2fa" stroke="#7a8ac0"/><path d="M2 13.5 V8.5 H4.5 V3 H9.5 V8 H13.5 V13.5Z" fill="#f4f6fa" stroke="#8a9ac0" stroke-width="0.7"/><rect x="2" y="9.5" width="4" height="4" fill="#10c060"/></svg>
<div class="a t" style="left:84.5px;top:453.03px;font-size:12px;line-height:14px;color:#000;font-weight:400;font-family:'Liberation Sans', sans-serif;transform:scaleX(0.875);transform-origin:0 0;">Pianto P1</div>
<div class="a" style="left:35px;top:478px;width:10px;height:1px;background:repeating-linear-gradient(to right,#a0a0a0 0 1px,transparent 1px 2px)"></div>
<svg class="a" style="left:45px;top:470px;" width="16" height="16" viewBox="0 0 16 16"><rect x="0.5" y="0.5" width="15" height="15" fill="#eef2fa" stroke="#7a8ac0"/><path d="M2 13.5 V8.5 H4.5 V3 H9.5 V8 H13.5 V13.5Z" fill="#a8c8e8" stroke="#6a98c8" stroke-width="0.7"/></svg>
<div class="a t" style="left:65.5px;top:471.03px;font-size:12px;line-height:14px;color:#000;font-weight:400;font-family:'Liberation Sans', sans-serif;transform:scaleX(0.875);transform-origin:0 0;">Garage/Cantina</div>
<div class="a" style="left:35px;top:496px;width:10px;height:1px;background:repeating-linear-gradient(to right,#a0a0a0 0 1px,transparent 1px 2px)"></div>
<svg class="a" style="left:45px;top:488px;" width="16" height="16" viewBox="0 0 16 16"><rect x="0.5" y="0.5" width="15" height="15" fill="#eef2fa" stroke="#7a8ac0"/><path d="M2 13.5 V8.5 H4.5 V3 H9.5 V8 H13.5 V13.5Z" fill="#a8c8e8" stroke="#6a98c8" stroke-width="0.7"/></svg>
<div class="a t" style="left:65.5px;top:489.03px;font-size:12px;line-height:14px;color:#000;font-weight:400;font-family:'Liberation Sans', sans-serif;transform:scaleX(0.875);transform-origin:0 0;">Sottotetto</div>
<svg class="a" style="left:208px;top:417px;" width="7" height="214" viewBox="0 0 7 214"><defs><pattern id="spl" x="0" y="0" width="6" height="6" patternUnits="userSpaceOnUse"><rect x="2" y="2" width="2" height="2" fill="#fff"/><rect x="1" y="1" width="2" height="2" fill="#888"/><rect x="5" y="5" width="2" height="2" fill="#fff"/><rect x="4" y="4" width="2" height="2" fill="#888"/></pattern></defs><rect width="7" height="214" fill="url(#spl)"/></svg>
<div class="a" style="left:5px;top:681px;width:199px;height:25px;background:#a0a0a0"></div>
<div class="a t" style="left:25.5px;top:687.03px;font-size:12px;line-height:14px;color:#fff;font-weight:700;font-family:'Liberation Sans', sans-serif;">Calcoli e verifiche</div>
<svg class="a" style="left:186px;top:689px;" width="9" height="9" viewBox="0 0 9 9"><path d="M1 4.5 L4.5 1 L8 4.5 M1 8.5 L4.5 5 L8 8.5" stroke="#fff" stroke-width="1.5" fill="none"/></svg>
<div class="a" style="left:5px;top:706px;width:199px;height:85px;background:#fff;border:1px solid #a0a0a0;border-top:none;box-sizing:border-box"></div>
<svg class="a" style="left:18px;top:717px;" width="17" height="17" viewBox="0 0 17 17"><rect x="0.5" y="0.5" width="15" height="15" fill="#eef2fa" stroke="#7a8ac0"/><rect x="3" y="3" width="2.5" height="2.5" fill="#e04040"/><rect x="3" y="7" width="2.5" height="2.5" fill="#4070d0"/><rect x="3" y="11" width="2.5" height="2.5" fill="#f09020"/><path d="M7 4 H13 M7 8 H13 M7 12 H13" stroke="#7080b0"/></svg>
<div class="a t" style="left:41.5px;top:719.03px;font-size:12px;line-height:14px;color:#000;font-weight:400;font-family:'Liberation Sans', sans-serif;">Verifica trasmittanze limite</div>
<svg class="a" style="left:18px;top:740px;" width="17" height="17" viewBox="0 0 17 17"><rect x="0.5" y="0.5" width="15" height="15" fill="#eef2fa" stroke="#7a8ac0"/><rect x="2.5" y="2.5" width="11" height="3" fill="#8aa0d0"/><path d="M3 8 H5 M7 8 H9 M11 8 H13 M3 11 H5 M7 11 H9 M11 11 H13" stroke="#6a82c0" stroke-width="1.5"/></svg>
<div class="a t" style="left:41.5px;top:742.03px;font-size:12px;line-height:14px;color:#000;font-weight:400;font-family:'Liberation Sans', sans-serif;transform:scaleX(0.985);transform-origin:0 0;">Rendimenti, fabbisogni ed EP</div>
<svg class="a" style="left:18px;top:763px;" width="17" height="17" viewBox="0 0 17 17"><rect x="0.5" y="0.5" width="15" height="15" fill="#eef2fa" stroke="#7a8ac0"/><rect x="3" y="9" width="2.5" height="5" fill="#4070d0"/><rect x="6.7" y="6" width="2.5" height="8" fill="#f09020"/><rect x="10.4" y="3" width="2.5" height="11" fill="#e04040"/></svg>
<div class="a t" style="left:41.5px;top:765.03px;font-size:12px;line-height:14px;color:#000;font-weight:400;font-family:'Liberation Sans', sans-serif;">Bilancio energetico e consumi</div>
<div class="a" style="left:5px;top:795px;width:199px;height:25px;background:#a0a0a0"></div>
<div class="a t" style="left:25.5px;top:801.03px;font-size:12px;line-height:14px;color:#fff;font-weight:700;font-family:'Liberation Sans', sans-serif;">Detrazioni fiscali</div>
<svg class="a" style="left:186px;top:803px;" width="9" height="9" viewBox="0 0 9 9"><path d="M1 1 L4.5 4.5 L8 1 M1 5 L4.5 8.5 L8 5" stroke="#fff" stroke-width="1.5" fill="none"/></svg>
<div class="a" style="left:5px;top:824px;width:199px;height:25px;background:#a0a0a0"></div>
<div class="a t" style="left:25.5px;top:830.03px;font-size:12px;line-height:14px;color:#fff;font-weight:700;font-family:'Liberation Sans', sans-serif;">Documenti</div>
<svg class="a" style="left:186px;top:832px;" width="9" height="9" viewBox="0 0 9 9"><path d="M1 4.5 L4.5 1 L8 4.5 M1 8.5 L4.5 5 L8 8.5" stroke="#fff" stroke-width="1.5" fill="none"/></svg>
<div class="a" style="left:5px;top:849px;width:199px;height:39px;background:#fff;border:1px solid #a0a0a0;border-top:none;box-sizing:border-box"></div>
<svg class="a" style="left:19px;top:859px;" width="14" height="17" viewBox="0 0 14 17"><rect x="0.5" y="2.5" width="12" height="14" fill="#f4f4f4" stroke="#7a7a8a"/><rect x="3" y="0.5" width="7" height="3" fill="#4a7ad0"/><path d="M3 7 H10 M3 10 H10 M3 13 H8" stroke="#9aa8c0"/></svg>
<div class="a t" style="left:41.5px;top:862.03px;font-size:12px;line-height:14px;color:#000;font-weight:400;font-family:'Liberation Sans', sans-serif;">Registro documenti</div>
<div class="a" style="left:220px;top:163px;width:672px;height:21px;background:#a0a0a0"></div>
<svg class="a" style="left:225px;top:166px;" width="16" height="16" viewBox="0 0 16 16"><rect x="1" y="2.5" width="13" height="12.5" fill="#f8d888" stroke="#c89848" stroke-width="0.9"/><rect x="2" y="3.5" width="11" height="2" fill="#fbe8b0"/><circle cx="9.5" cy="3.5" r="2.6" fill="#3a7ad8" stroke="#1a4aa8" stroke-width="0.6"/><circle cx="9" cy="3" r="0.9" fill="#cfe0ff"/></svg>
<div class="a t" style="left:244.5px;top:167.03px;font-size:12px;line-height:14px;color:#fff;font-weight:700;font-family:'Liberation Sans', sans-serif;letter-spacing:0.3px;">Dettaglio zona</div>
<div class="a t" style="left:231.5px;top:192.03px;font-size:12px;line-height:14px;color:#000;font-weight:400;font-family:'Liberation Sans', sans-serif;transform:scaleX(0.9075);transform-origin:0 0;">PARAMETRI TERMICI</div>
<div class="a" style="left:354px;top:189px;width:1px;height:21px;background:#b4b4b4;box-shadow:1px 0 0 #fff"></div>
<div class="a" style="left:360px;top:189px;width:95px;height:20px;background:#f7f7f7;border:1px solid #fff;border-top-color:#7a7a7a;border-left-color:#7a7a7a;box-sizing:border-box;box-shadow:inset 1px 1px 0 #a8a8a8"></div>
<div class="a t" style="left:370px;top:192.53px;font-size:12px;line-height:14px;color:#000;font-weight:400;font-family:'Liberation Sans', sans-serif;transform:scaleX(0.9075);transform-origin:0 0;">VENTILAZIONE</div>
<div class="a" style="left:460px;top:189px;width:1px;height:21px;background:#b4b4b4;box-shadow:1px 0 0 #fff"></div>
<div class="a t" style="left:475px;top:192.03px;font-size:12px;line-height:14px;color:#000;font-weight:400;font-family:'Liberation Sans', sans-serif;transform:scaleX(0.9075);transform-origin:0 0;">IMPIANTI</div>
<div class="a" style="left:535px;top:189px;width:1px;height:21px;background:#b4b4b4;box-shadow:1px 0 0 #fff"></div>
<div class="a t" style="left:550.5px;top:192.03px;font-size:12px;line-height:14px;color:#000;font-weight:400;font-family:'Liberation Sans', sans-serif;transform:scaleX(0.9075);transform-origin:0 0;">RISCALDAMENTO</div>
<div class="a" style="left:655px;top:189px;width:1px;height:21px;background:#b4b4b4;box-shadow:1px 0 0 #fff"></div>
<div class="a t" style="left:676px;top:192.03px;font-size:12px;line-height:14px;color:#000;font-weight:400;font-family:'Liberation Sans', sans-serif;transform:scaleX(0.9075);transform-origin:0 0;">A.C.S.</div>
<div class="a" style="left:725px;top:189px;width:1px;height:21px;background:#b4b4b4;box-shadow:1px 0 0 #fff"></div>
<div class="a t" style="left:740.5px;top:192.03px;font-size:12px;line-height:14px;color:#000;font-weight:400;font-family:'Liberation Sans', sans-serif;transform:scaleX(0.875);transform-origin:0 0;">RAFFRESCAMENTO</div>
<div class="a" style="left:855px;top:189px;width:1px;height:21px;background:#b4b4b4;box-shadow:1px 0 0 #fff"></div>
<div class="a" style="left:860px;top:194px;width:31px;height:16px;background:#fff;border:1px solid #c8c8c8;box-sizing:border-box;border-radius:2px"></div>
<div class="a" style="left:875px;top:195px;width:1px;height:14px;background:#d8d8d8"></div>
<svg class="a" style="left:864px;top:198px;" width="8" height="8" viewBox="0 0 8 8"><path d="M5.5 1 L2 4 L5.5 7Z" fill="#000"/></svg>
<svg class="a" style="left:879px;top:198px;" width="8" height="8" viewBox="0 0 8 8"><path d="M2.5 1 L6 4 L2.5 7Z" fill="#000"/></svg>
<div class="a" style="left:224px;top:224px;width:200px;height:19px;background:#ffffe1;border:1px solid #a0a0a0;box-sizing:border-box"></div>
<div class="a t" style="left:228.5px;top:227.03px;font-size:12px;line-height:14px;color:#000;font-weight:400;font-family:'Liberation Sans', sans-serif;transform:scaleX(0.875);transform-origin:0 0;">Tipologia ventilazione:</div>
<div class="a" style="left:426px;top:224px;width:192px;height:19px;background:#fff;border:1px solid #a8a8a8;box-sizing:border-box"></div>
<div class="a t" style="left:429.5px;top:227.03px;font-size:12px;line-height:14px;color:#000;font-weight:400;font-family:'Liberation Sans', sans-serif;transform:scaleX(0.875);transform-origin:0 0;">Naturale</div>
<div class="a" style="left:601px;top:225px;width:16px;height:17px;background:#f0f0f0"></div>
<svg class="a" style="left:604px;top:231px;" width="9" height="6" viewBox="0 0 9 6"><path d="M0.5 0.5 H8.5 L4.5 5Z" fill="#000"/></svg>
<div class="a" style="left:628px;top:228px;width:11px;height:11px;background:#fff;border:1px solid #8e8e8e;box-sizing:border-box"></div>
<div class="a t" style="left:645px;top:226.03px;font-size:12px;line-height:14px;color:#000;font-weight:400;font-family:'Liberation Sans', sans-serif;transform:scaleX(0.884);transform-origin:0 0;">Ventilazione naturale diversa per singolo vano</div>
<div class="a" style="left:224px;top:249px;width:664px;height:21px;background:#a0a0a0"></div>
<div class="a t" style="left:228px;top:253.03px;font-size:12px;line-height:14px;color:#fff;font-weight:700;font-family:'Liberation Sans', sans-serif;letter-spacing:0.3px;white-space:pre;">Ventilazione naturale (UNI/TS 11300-1:2014 12.1, UNI 10339)</div>
<div class="a" style="left:224px;top:277px;width:31px;height:19px;background:#ffffe1;border:1px solid #a0a0a0;box-sizing:border-box"></div>
<div class="a" style="left:254px;top:277px;width:212px;height:19px;background:#ffffe1;border:1px solid #a0a0a0;box-sizing:border-box"></div>
<div class="a t" style="left:224px;top:279.73px;width:31px;text-align:center;font-size:12px;line-height:14px;color:#000;transform:scaleX(0.875);transform-origin:50% 0">Qop</div>
<div class="a t" style="left:258.5px;top:280.03px;font-size:12px;line-height:14px;color:#000;font-weight:400;font-family:'Liberation Sans', sans-serif;transform:scaleX(0.875);transform-origin:0 0;">Portata d'aria per persona:</div>
<div class="a" style="left:468px;top:277px;width:65px;height:19px;background:#fff;border:1px solid #a0a0a0;box-sizing:border-box"></div>
<div class="a t" style="left:468px;top:279.73px;width:63.5px;text-align:right;font-size:12px;line-height:14px;color:#000;transform:scaleX(0.875);transform-origin:100% 0">39,60</div>
<div class="a t" style="left:536.5px;top:281.03px;font-size:12px;line-height:14px;color:#000;font-weight:400;font-family:'Liberation Sans', sans-serif;transform:scaleX(0.875);transform-origin:0 0;">m³/h</div>
<div class="a" style="left:224px;top:298px;width:31px;height:19px;background:#ffffe1;border:1px solid #a0a0a0;box-sizing:border-box"></div>
<div class="a" style="left:254px;top:298px;width:212px;height:19px;background:#ffffe1;border:1px solid #a0a0a0;box-sizing:border-box"></div>
<div class="a t" style="left:224px;top:300.73px;width:31px;text-align:center;font-size:12px;line-height:14px;color:#000;transform:scaleX(0.875);transform-origin:50% 0">Ns</div>
<div class="a t" style="left:258.5px;top:301.03px;font-size:12px;line-height:14px;color:#000;font-weight:400;font-family:'Liberation Sans', sans-serif;transform:scaleX(0.875);transform-origin:0 0;">Indice affollamento:</div>
<div class="a" style="left:468px;top:298px;width:65px;height:19px;background:#fff;border:1px solid #a0a0a0;box-sizing:border-box"></div>
<div class="a t" style="left:468px;top:300.73px;width:63.5px;text-align:right;font-size:12px;line-height:14px;color:#000;transform:scaleX(0.875);transform-origin:100% 0">0,06</div>
<div class="a t" style="left:536.5px;top:302.03px;font-size:12px;line-height:14px;color:#000;font-weight:400;font-family:'Liberation Sans', sans-serif;transform:scaleX(0.875);transform-origin:0 0;">persone/m&nbsp;²</div>
<div class="a" style="left:224px;top:319px;width:31px;height:19px;background:#ffffe1;border:1px solid #a0a0a0;box-sizing:border-box"></div>
<div class="a" style="left:254px;top:319px;width:212px;height:19px;background:#ffffe1;border:1px solid #a0a0a0;box-sizing:border-box"></div>
<div class="a t" style="left:224px;top:321.73px;width:31px;text-align:center;font-size:12px;line-height:14px;color:#000;transform:scaleX(0.875);transform-origin:50% 0">Qos</div>
<div class="a t" style="left:258.5px;top:322.03px;font-size:12px;line-height:14px;color:#000;font-weight:400;font-family:'Liberation Sans', sans-serif;transform:scaleX(0.875);transform-origin:0 0;">Portata d'aria per superficie:</div>
<div class="a" style="left:468px;top:319px;width:65px;height:19px;background:#fff;border:1px solid #a0a0a0;box-sizing:border-box"></div>
<div class="a t" style="left:468px;top:321.73px;width:63.5px;text-align:right;font-size:12px;line-height:14px;color:#000;transform:scaleX(0.875);transform-origin:100% 0">0,00</div>
<div class="a t" style="left:537.5px;top:323.03px;font-size:12px;line-height:14px;color:#000;font-weight:400;font-family:'Liberation Sans', sans-serif;transform:scaleX(0.875);transform-origin:0 0;">m³/h</div>
<div class="a" style="left:224px;top:340px;width:31px;height:19px;background:#ffffe1;border:1px solid #a0a0a0;box-sizing:border-box"></div>
<div class="a" style="left:254px;top:340px;width:212px;height:19px;background:#ffffe1;border:1px solid #a0a0a0;box-sizing:border-box"></div>
<div class="a t" style="left:224px;top:342.73px;width:31px;text-align:center;font-size:12px;line-height:14px;color:#000;transform:scaleX(0.875);transform-origin:50% 0">Fve,t</div>
<div class="a t" style="left:258.5px;top:343.03px;font-size:12px;line-height:14px;color:#000;font-weight:400;font-family:'Liberation Sans', sans-serif;transform:scaleX(0.875);transform-origin:0 0;">Fattore di correzione:</div>
<div class="a" style="left:468px;top:340px;width:65px;height:19px;background:#fff;border:1px solid #a0a0a0;box-sizing:border-box"></div>
<div class="a t" style="left:468px;top:342.73px;width:63.5px;text-align:right;font-size:12px;line-height:14px;color:#000;transform:scaleX(0.875);transform-origin:100% 0">0,59</div>
<div class="a" style="left:224px;top:361px;width:242px;height:19px;background:#ffffe1;border:1px solid #a0a0a0;box-sizing:border-box"></div>
<div class="a t" style="left:228.5px;top:364.03px;font-size:12px;line-height:14px;color:#000;font-weight:400;font-family:'Liberation Sans', sans-serif;transform:scaleX(0.875);transform-origin:0 0;">Tasso ricambio d'aria di progetto:</div>
<div class="a" style="left:468px;top:361px;width:65px;height:19px;background:#fff;border:1px solid #a0a0a0;box-sizing:border-box"></div>
<div class="a t" style="left:468px;top:363.73px;width:63.5px;text-align:right;font-size:12px;line-height:14px;color:#000;transform:scaleX(0.875);transform-origin:100% 0">0,50</div>
<div class="a t" style="left:536.5px;top:365.03px;font-size:12px;line-height:14px;color:#000;font-weight:400;font-family:'Liberation Sans', sans-serif;transform:scaleX(0.875);transform-origin:0 0;">vol/h</div>
<div class="a" style="left:598px;top:280px;width:1px;height:78px;background:#3c8ad8"></div>
<div class="a t" style="left:619px;top:309.53px;font-size:12px;line-height:14px;color:#0a6ac8;font-weight:700;font-family:'Liberation Sans', sans-serif;letter-spacing:0.3px;"><u>Valori da UNI 10339 e 11300-1</u></div>
<div class="a" style="left:227px;top:387px;width:11px;height:11px;background:#fff;border:1px solid #8e8e8e;box-sizing:border-box"></div>
<div class="a t" style="left:248px;top:385.03px;font-size:12px;line-height:14px;color:#000;font-weight:400;font-family:'Liberation Sans', sans-serif;transform:scaleX(0.878);transform-origin:0 0;">Considera questa zona come cucine, bagni, corridoi o locali di servizio ai fini del ricambio d'aria - UNI 11300-1:2014 - Punto 12.1</div>
<div class="a" style="left:224px;top:406px;width:664px;height:21px;background:#a0a0a0"></div>
<div class="a t" style="left:228px;top:409.53px;font-size:12px;line-height:14px;color:#fff;font-weight:700;font-family:'Liberation Sans', sans-serif;letter-spacing:0.3px;white-space:pre;">Ventilazione meccanica  (UNI/TS 11300-1:2014 12.1)</div>
<div class="a" style="left:224px;top:434px;width:242px;height:19px;background:#ffffe1;border:1px solid #a0a0a0;box-sizing:border-box"></div>
<div class="a t" style="left:228.5px;top:437.03px;font-size:12px;line-height:14px;color:#000;font-weight:400;font-family:'Liberation Sans', sans-serif;transform:scaleX(0.875);transform-origin:0 0;">Portata del sistema di <span style="letter-spacing:-0.35px">immissione:</span></div>
<div class="a" style="left:468px;top:434px;width:65px;height:19px;background:#f0f0f0;border:1px solid #a8a8a8;box-sizing:border-box"></div>
<div class="a t" style="left:468px;top:436.73px;width:63.5px;text-align:right;font-size:12px;line-height:14px;color:#a0a0a0;transform:scaleX(0.875);transform-origin:100% 0">0,00</div>
<div class="a t" style="left:536.5px;top:438.03px;font-size:12px;line-height:14px;color:#000;font-weight:400;font-family:'Liberation Sans', sans-serif;transform:scaleX(0.875);transform-origin:0 0;">m³/h</div>
<div class="a" style="left:224px;top:455px;width:242px;height:19px;background:#ffffe1;border:1px solid #a0a0a0;box-sizing:border-box"></div>
<div class="a t" style="left:228.5px;top:458.03px;font-size:12px;line-height:14px;color:#000;font-weight:400;font-family:'Liberation Sans', sans-serif;transform:scaleX(0.875);transform-origin:0 0;">Portata del sistema di estrazione:</div>
<div class="a" style="left:468px;top:455px;width:65px;height:19px;background:#f0f0f0;border:1px solid #a8a8a8;box-sizing:border-box"></div>
<div class="a t" style="left:468px;top:457.73px;width:63.5px;text-align:right;font-size:12px;line-height:14px;color:#a0a0a0;transform:scaleX(0.875);transform-origin:100% 0">0,00</div>
<div class="a t" style="left:536.5px;top:459.03px;font-size:12px;line-height:14px;color:#000;font-weight:400;font-family:'Liberation Sans', sans-serif;transform:scaleX(0.875);transform-origin:0 0;">m³/h</div>
<div class="a" style="left:224px;top:477px;width:31px;height:19px;background:#ffffe1;border:1px solid #a0a0a0;box-sizing:border-box"></div>
<div class="a" style="left:254px;top:477px;width:212px;height:19px;background:#ffffe1;border:1px solid #a0a0a0;box-sizing:border-box"></div>
<div class="a t" style="left:224px;top:479.73px;width:31px;text-align:center;font-size:12px;line-height:14px;color:#000;transform:scaleX(0.875);transform-origin:50% 0">FCve</div>
<div class="a t" style="left:258.5px;top:480.03px;font-size:12px;line-height:14px;color:#000;font-weight:400;font-family:'Liberation Sans', sans-serif;transform:scaleX(0.875);transform-origin:0 0;">Efficienza regolazione impianto:</div>
<div class="a" style="left:468px;top:477px;width:65px;height:19px;background:#f0f0f0;border:1px solid #a8a8a8;box-sizing:border-box"></div>
<div class="a t" style="left:468px;top:479.73px;width:63.5px;text-align:right;font-size:12px;line-height:14px;color:#a0a0a0;transform:scaleX(0.875);transform-origin:100% 0">1,00</div>
<div class="a t" style="left:571px;top:478.53px;font-size:12px;line-height:14px;color:#7a7a7a;font-weight:700;font-family:'Liberation Sans', sans-serif;letter-spacing:0.25px;"><u>Valori da UNI/TS 11300-1 - Prospetto 11</u></div>
<div class="a" style="left:224px;top:499px;width:242px;height:19px;background:#ffffe1;border:1px solid #a0a0a0;box-sizing:border-box"></div>
<div class="a t" style="left:228.5px;top:502.03px;font-size:12px;line-height:14px;color:#000;font-weight:400;font-family:'Liberation Sans', sans-serif;transform:scaleX(0.875);transform-origin:0 0;">Tipologia di flusso d'aria:</div>
<div class="a" style="left:468px;top:499px;width:372px;height:19px;background:#f0f0f0;border:1px solid #a8a8a8;box-sizing:border-box"></div>
<div class="a t" style="left:471px;top:502.03px;font-size:12px;line-height:14px;color:#a0a0a0;font-weight:400;font-family:'Liberation Sans', sans-serif;transform:scaleX(0.875);transform-origin:0 0;">Ventilatore premente</div>
<svg class="a" style="left:826px;top:506px;" width="9" height="6" viewBox="0 0 9 6"><path d="M0.5 0.5 H8.5 L4.5 5Z" fill="#a0a0a0"/></svg>
<div class="a" style="left:225px;top:527px;width:11px;height:11px;background:#f0f0f0;border:1px solid #c8c8c8;box-sizing:border-box"></div>
<div class="a t" style="left:242.5px;top:525.03px;font-size:12px;line-height:14px;color:#a0a0a0;font-weight:400;font-family:'Liberation Sans', sans-serif;transform:scaleX(0.875);transform-origin:0 0;">Impianto di ventilazione con pre-riscaldamento o pre-raffrescamento</div>
<div class="a" style="left:225px;top:545px;width:11px;height:11px;background:#f0f0f0;border:1px solid #c8c8c8;box-sizing:border-box"></div>
<div class="a t" style="left:242.5px;top:543.03px;font-size:12px;line-height:14px;color:#a0a0a0;font-weight:400;font-family:'Liberation Sans', sans-serif;transform:scaleX(0.875);transform-origin:0 0;">pre-riscaldamento o pre-raffrescamento da recuperatore di calore</div>
<div class="a t" style="left:571px;top:543.53px;font-size:12px;line-height:14px;color:#7a7a7a;font-weight:700;font-family:'Liberation Sans', sans-serif;letter-spacing:0.25px;"><u>Calcola da UNI/TS 11300-1 - Appendice F</u></div>
<div class="a" style="left:224px;top:566px;width:242px;height:19px;background:#ffffe1;border:1px solid #a0a0a0;box-sizing:border-box"></div>
<div class="a t" style="left:228.5px;top:569.03px;font-size:12px;line-height:14px;color:#000;font-weight:400;font-family:'Liberation Sans', sans-serif;transform:scaleX(0.875);transform-origin:0 0;">Temperatura immissione aria da progetto:</div>
<div class="a" style="left:468px;top:566px;width:65px;height:19px;background:#f0f0f0;border:1px solid #a8a8a8;box-sizing:border-box"></div>
<div class="a t" style="left:468px;top:568.73px;width:63.5px;text-align:right;font-size:12px;line-height:14px;color:#a0a0a0;transform:scaleX(0.875);transform-origin:100% 0">20,00</div>
<div class="a t" style="left:537.5px;top:570.03px;font-size:12px;line-height:14px;color:#000;font-weight:400;font-family:'Liberation Sans', sans-serif;transform:scaleX(0.875);transform-origin:0 0;">°C</div>
<div class="a" style="left:227px;top:595px;width:11px;height:11px;background:#f0f0f0;border:1px solid #c8c8c8;box-sizing:border-box"></div>
<div class="a t" style="left:244.5px;top:593.03px;font-size:12px;line-height:14px;color:#a0a0a0;font-weight:400;font-family:'Liberation Sans', sans-serif;transform:scaleX(0.875);transform-origin:0 0;">Considera free-cooling (ventilazione notturna) per la stagione di raffrescamento</div>
<div class="a" style="left:224px;top:612px;width:242px;height:19px;background:#ffffe1;border:1px solid #a0a0a0;box-sizing:border-box"></div>
<div class="a t" style="left:228.5px;top:615.03px;font-size:12px;line-height:14px;color:#000;font-weight:400;font-family:'Liberation Sans', sans-serif;transform:scaleX(0.875);transform-origin:0 0;">Portata aria esterna per raffrescamento notturno:</div>
<div class="a" style="left:468px;top:612px;width:65px;height:19px;background:#f0f0f0;border:1px solid #a8a8a8;box-sizing:border-box"></div>
<div class="a t" style="left:468px;top:614.73px;width:63.5px;text-align:right;font-size:12px;line-height:14px;color:#a0a0a0;transform:scaleX(0.875);transform-origin:100% 0">0,00</div>
<div class="a t" style="left:536.5px;top:616.03px;font-size:12px;line-height:14px;color:#000;font-weight:400;font-family:'Liberation Sans', sans-serif;transform:scaleX(0.875);transform-origin:0 0;">m³/h</div>
<div class="a" style="left:224px;top:641px;width:664px;height:20px;background:#a0a0a0"></div>
<div class="a t" style="left:228px;top:644.03px;font-size:12px;line-height:14px;color:#fff;font-weight:700;font-family:'Liberation Sans', sans-serif;letter-spacing:0.11px;white-space:pre;">Coefficiente di dispersione termica per ventilazione  (UNI/TS 11300-1:2014)</div>
<div class="a" style="left:224px;top:668px;width:200px;height:18px;background:#ffffe1;border:1px solid #a0a0a0;box-sizing:border-box"></div>
<div class="a t" style="left:228.5px;top:670.03px;font-size:12px;line-height:14px;color:#000;font-weight:400;font-family:'Liberation Sans', sans-serif;transform:scaleX(0.875);transform-origin:0 0;">Dispersione a volume:</div>
<div class="a" style="left:426px;top:667px;width:65px;height:19px;background:#f0f0f0;border:1px solid #3a3a3a;box-sizing:border-box"></div>
<div class="a t" style="left:426px;top:669.73px;width:63.5px;text-align:right;font-size:12px;line-height:14px;color:#a0a0a0;transform:scaleX(0.875);transform-origin:100% 0">0,0000</div>
<div class="a t" style="left:494px;top:671.03px;font-size:12px;line-height:14px;color:#000;font-weight:400;font-family:'Liberation Sans', sans-serif;transform:scaleX(0.875);transform-origin:0 0;">W/m³</div>
<div class="a" style="left:898px;top:159px;width:343px;height:18px;background:#f0f0f0;border:1px solid #8a8a8a;box-sizing:border-box;border-radius:2px"></div>
<svg class="a" style="left:1224px;top:162px;" width="10" height="12" viewBox="0 0 10 12"><rect x="2.5" y="0.5" width="5" height="6" fill="none" stroke="#000"/><rect x="5.5" y="0.5" width="2" height="6" fill="#000"/><path d="M0.5 7 H9.5 M5 7 V11.5" stroke="#000"/></svg>
<div class="a" style="left:1242px;top:157px;width:22px;height:735px;background:#fff"></div>
<div class="a" style="left:1244px;top:161px;width:20px;height:92px;background:#f4f4f4;border:1px solid #a0a0a0;border-right:none;box-sizing:border-box"></div>
<svg class="a" style="left:1247px;top:165px;" width="14" height="16" viewBox="0 0 14 16"><rect x="0.5" y="0.5" width="12" height="14" fill="#eef2fa" stroke="#7a8ac0"/><path d="M4 0.5 V6.5 L5.75 5 L7.5 6.5 V0.5" fill="#d83040"/><path d="M3 9.5 H10 M3 12 H10" stroke="#8a9ac8"/></svg>
<div class="a t" style="left:1246px;top:186px;width:16px;height:62px;"><div style="position:absolute;left:16px;top:0;transform:rotate(90deg);transform-origin:0 0;font-size:11.8px;font-weight:700;line-height:16px;color:#000;white-space:nowrap">Segnalibro</div></div>
<div class="a t" style="left:907px;top:184.71px;font-size:16px;line-height:18px;color:#9dbade;font-weight:700;font-family:'Liberation Serif', serif;letter-spacing:0.4px;">Impianto</div>
<div class="a" style="left:908px;top:207px;width:315px;height:51px;border:1px solid #666666;box-sizing:border-box"></div>
<svg class="a" style="left:915px;top:217px;" width="16" height="16" viewBox="0 0 16 16"><circle cx="8" cy="8" r="7.2" fill="#eaf2fc" stroke="#4a7ad0" stroke-width="1.2"/><path d="M3 10 A5.3 5.3 0 0 1 13 10" fill="none" stroke="#9ab8e8" stroke-width="1"/><path d="M7 9 L11.5 4" stroke="#333" stroke-width="1.4"/><circle cx="7" cy="9" r="1.4" fill="#333"/><path d="M12 6 L13 9" stroke="#e03030" stroke-width="1.6"/></svg>
<div class="a t" style="left:935.5px;top:217.99px;font-size:12.75px;line-height:15px;color:#000;font-weight:400;font-family:'Liberation Sans', sans-serif;">Inserisci nuovo impianto</div>
<div class="a t" style="left:935.5px;top:236.29px;font-size:10px;line-height:12px;color:#000;font-weight:400;font-family:'Liberation Sans', sans-serif;transform:scaleX(1.02);transform-origin:0 0;">Crea un nuovo impianto per singolo servizio o combinato</div>
<div class="a" style="left:906px;top:263px;width:156px;height:25px;border:1px solid #666666;box-sizing:border-box"></div>
<svg class="a" style="left:924px;top:266px;" width="16" height="17" viewBox="0 0 16 17"><rect x="1.5" y="1.5" width="13" height="13.5" fill="#eef2fa" stroke="#7a8ac0"/><path d="M6.5 6.5 L14.5 14.5" stroke="#56667f" stroke-width="3.6" stroke-linecap="round"/><path d="M6.5 6.5 L14.5 14.5" stroke="#b8c6dc" stroke-width="1.5" stroke-linecap="round"/><circle cx="6" cy="6" r="4" fill="#8898b4" stroke="#56667f" stroke-width="0.8"/><path d="M1.8 4.6 L4.6 1.8 L7.6 4.8 L4.8 7.6Z" fill="#eef2fa"/></svg>
<div class="a t" style="left:944.5px;top:267.99px;font-size:12.75px;line-height:15px;color:#000;font-weight:400;font-family:'Liberation Sans', sans-serif;">Modifica impianto</div>
<div class="a" style="left:1065px;top:263px;width:156px;height:25px;border:1px solid #666666;box-sizing:border-box"></div>
<svg class="a" style="left:1089px;top:272px;" width="11" height="5" viewBox="0 0 11 5"><rect x="0.5" y="0.5" width="10" height="4" fill="#f0502a" stroke="#d83818" stroke-width="0.8"/></svg>
<div class="a t" style="left:1106px;top:267.99px;font-size:12.75px;line-height:15px;color:#000;font-weight:400;font-family:'Liberation Sans', sans-serif;">Elimina impianto</div>
<div class="a" style="left:906px;top:299px;width:315px;height:51px;border:1px solid #666666;box-sizing:border-box"></div>
<svg class="a" style="left:913px;top:311px;" width="16" height="11" viewBox="0 0 16 11"><path d="M1 4 Q3 1 7 2 L9 3 Q12 1 15 4" fill="none" stroke="#6a6a6a" stroke-width="1.2"/><circle cx="4.5" cy="6.5" r="3.3" fill="#b8c8d8" stroke="#5a6a7a"/><circle cx="11.5" cy="6.5" r="3.3" fill="#b8c8d8" stroke="#5a6a7a"/><circle cx="4.5" cy="6.5" r="1.5" fill="#e8f0f8"/><circle cx="11.5" cy="6.5" r="1.5" fill="#e8f0f8"/></svg>
<div class="a t" style="left:933.2px;top:310.19px;font-size:12.75px;line-height:15px;color:#000;font-weight:400;font-family:'Liberation Sans', sans-serif;">Inserisci nuovo componente</div>
<div class="a t" style="left:933.2px;top:328.00px;font-size:10px;line-height:12px;color:#000;font-weight:400;font-family:'Liberation Sans', sans-serif;transform:scaleX(1.01);transform-origin:0 0;">Inserisci un nuovo componente per l'impianto selezionato</div>
<div class="a" style="left:906px;top:353px;width:156px;height:25px;border:1px solid #666666;box-sizing:border-box"></div>
<svg class="a" style="left:916px;top:358px;" width="15" height="15" viewBox="0 0 15 15"><rect x="0.5" y="0.5" width="8.5" height="8.5" fill="#a8d468" stroke="#5a9a2a"/><rect x="5.5" y="5.5" width="8.5" height="8.5" fill="#8cc24a" stroke="#4a8a1a"/></svg>
<div class="a t" style="left:936.2px;top:357.79px;font-size:12.75px;line-height:15px;color:#000;font-weight:400;font-family:'Liberation Sans', sans-serif;">Duplica componente</div>
<div class="a" style="left:1065px;top:353px;width:156px;height:25px;border:1px solid #666666;box-sizing:border-box"></div>
<svg class="a" style="left:1078px;top:362px;" width="11" height="5" viewBox="0 0 11 5"><rect x="0.5" y="0.5" width="10" height="4" fill="#f0502a" stroke="#d83818" stroke-width="0.8"/></svg>
<div class="a t" style="left:1095.1px;top:357.79px;font-size:12.75px;line-height:15px;color:#000;font-weight:400;font-family:'Liberation Sans', sans-serif;">Elimina componente</div>
<div class="a t" style="left:906.4px;top:389.21px;font-size:16px;line-height:18px;color:#9dbade;font-weight:700;font-family:'Liberation Serif', serif;letter-spacing:0.5px;">Edificio e strutture</div>
<div class="a" style="left:906px;top:414px;width:100px;height:25px;border:1px solid #666666;box-sizing:border-box"></div>
<svg class="a" style="left:917px;top:420px;" width="11" height="11" viewBox="0 0 11 11"><path d="M3.5 0.5 H7.5 V3.5 H10.5 V7.5 H7.5 V10.5 H3.5 V7.5 H0.5 V3.5 H3.5Z" fill="#5ac23a" stroke="#2e8a1e" stroke-width="0.9"/></svg>
<div class="a t" style="left:935.3px;top:418.49px;font-size:12.75px;line-height:15px;color:#000;font-weight:400;font-family:'Liberation Sans', sans-serif;">Appendi</div>
<svg class="a" style="left:993px;top:425px;" width="8" height="5" viewBox="0 0 8 5"><path d="M0 0 H8 L4 4.5Z" fill="#000"/></svg>
<div class="a" style="left:1009px;top:414px;width:25px;height:25px;border:1px solid #666666;box-sizing:border-box"></div>
<svg class="a" style="left:1016px;top:424px;" width="11" height="5" viewBox="0 0 11 5"><rect x="0.5" y="0.5" width="10" height="4" fill="#f0502a" stroke="#d83818" stroke-width="0.8"/></svg>
<div class="a" style="left:1037px;top:414px;width:25px;height:25px;border:1px solid #666666;box-sizing:border-box"></div>
<svg class="a" style="left:1042px;top:419px;" width="15" height="15" viewBox="0 0 15 15"><rect x="0.5" y="0.5" width="8.5" height="8.5" fill="#a8d468" stroke="#5a9a2a"/><rect x="5.5" y="5.5" width="8.5" height="8.5" fill="#8cc24a" stroke="#4a8a1a"/></svg>
<div class="a" style="left:1065px;top:414px;width:25px;height:25px;border:1px solid #666666;box-sizing:border-box"></div>
<svg class="a" style="left:1070px;top:418px;" width="15" height="16" viewBox="0 0 15 16"><rect x="4.5" y="0.5" width="9" height="11" fill="#eef2fa" stroke="#6a82c0"/><rect x="0.5" y="3.5" width="9" height="11.5" fill="#eef2fa" stroke="#6a82c0"/></svg>
<div class="a" style="left:1093px;top:414px;width:25px;height:25px;border:1px solid #666666;box-sizing:border-box"></div>
<svg class="a" style="left:1098px;top:418px;" width="15" height="16" viewBox="0 0 15 16"><rect x="0.5" y="1.5" width="10" height="12" fill="#f0c070" stroke="#c08a30"/><rect x="3" y="0.5" width="5" height="2.5" fill="#d8dce8" stroke="#7a8ab0" stroke-width="0.8"/><rect x="4.5" y="5.5" width="9.5" height="10" fill="#eef2fa" stroke="#6a82c0"/></svg>
<div class="a" style="left:1121px;top:414px;width:25px;height:25px;border:1px solid #666666;box-sizing:border-box"></div>
<svg class="a" style="left:1126px;top:419px;" width="16" height="15" viewBox="0 0 16 15"><rect x="0.5" y="0.5" width="11" height="14" fill="#f4f6fb" stroke="#8a9ac8"/><rect x="2" y="5" width="13.5" height="7" fill="#d03030"/><text x="8.7" y="10.8" font-family="Liberation Sans" font-weight="700" font-size="5.8" fill="#fff" text-anchor="middle">PDF</text></svg>
<div class="a" style="left:1149px;top:414px;width:25px;height:25px;border:1px solid #666666;box-sizing:border-box"></div>
<svg class="a" style="left:1154px;top:419px;" width="16" height="15" viewBox="0 0 16 15"><rect x="0.5" y="0.5" width="11" height="14" fill="#f4f6fb" stroke="#8a9ac8"/><rect x="2" y="5" width="13.5" height="7" fill="#3a6ab8"/><text x="8.7" y="10.8" font-family="Liberation Sans" font-weight="700" font-size="5.8" fill="#fff" text-anchor="middle">DOC</text></svg>
<div class="a" style="left:906px;top:442px;width:315px;height:63px;border:1px solid #666666;box-sizing:border-box"></div>
<svg class="a" style="left:913px;top:451px;" width="16" height="17" viewBox="0 0 16 17"><rect x="1.5" y="1.5" width="13" height="13.5" fill="#eef2fa" stroke="#7a8ac0"/><path d="M6.5 6.5 L14.5 14.5" stroke="#56667f" stroke-width="3.6" stroke-linecap="round"/><path d="M6.5 6.5 L14.5 14.5" stroke="#b8c6dc" stroke-width="1.5" stroke-linecap="round"/><circle cx="6" cy="6" r="4" fill="#8898b4" stroke="#56667f" stroke-width="0.8"/><path d="M1.8 4.6 L4.6 1.8 L7.6 4.8 L4.8 7.6Z" fill="#eef2fa"/></svg>
<div class="a t" style="left:933.2px;top:453.09px;font-size:12.75px;line-height:15px;color:#000;font-weight:400;font-family:'Liberation Sans', sans-serif;">Modifica tipologia elemento</div>
<div class="a t" style="left:933.2px;top:471.19px;font-size:10px;line-height:12px;color:#000;font-weight:400;font-family:'Liberation Sans', sans-serif;transform:scaleX(0.985);transform-origin:0 0;">Permette di modificare la stratigrafia della struttura selezionata o</div>
<div class="a t" style="left:933.2px;top:483.09px;font-size:10px;line-height:12px;color:#000;font-weight:400;font-family:'Liberation Sans', sans-serif;transform:scaleX(1.018);transform-origin:0 0;">il dettaglio dell'infisso o del ponte termico</div>
<div class="a" style="left:906px;top:508px;width:315px;height:63px;border:1px solid #666666;box-sizing:border-box"></div>
<svg class="a" style="left:913px;top:517px;" width="16" height="17" viewBox="0 0 16 17"><rect x="1.5" y="1.5" width="13" height="13.5" fill="#eef2fa" stroke="#7a8ac0"/><path d="M6.5 6.5 L14.5 14.5" stroke="#56667f" stroke-width="3.6" stroke-linecap="round"/><path d="M6.5 6.5 L14.5 14.5" stroke="#b8c6dc" stroke-width="1.5" stroke-linecap="round"/><circle cx="6" cy="6" r="4" fill="#8898b4" stroke="#56667f" stroke-width="0.8"/><path d="M1.8 4.6 L4.6 1.8 L7.6 4.8 L4.8 7.6Z" fill="#eef2fa"/></svg>
<div class="a t" style="left:933.2px;top:519.19px;font-size:12.75px;line-height:15px;color:#000;font-weight:400;font-family:'Liberation Sans', sans-serif;">Modifica parete o solaio composto</div>
<div class="a t" style="left:933.2px;top:537.30px;font-size:10px;line-height:12px;color:#000;font-weight:400;font-family:'Liberation Sans', sans-serif;transform:scaleX(1.025);transform-origin:0 0;">Permette di definire la parete o il solaio indicandone i</div>
<div class="a t" style="left:933.2px;top:549.20px;font-size:10px;line-height:12px;color:#000;font-weight:400;font-family:'Liberation Sans', sans-serif;transform:scaleX(1.035);transform-origin:0 0;">componenti principali e secondari</div>
<div class="a" style="left:906px;top:574px;width:315px;height:25px;border:1px solid #666666;box-sizing:border-box"></div>
<svg class="a" style="left:914px;top:578px;" width="16" height="15" viewBox="0 0 16 15"><path d="M2 7 Q3 2 9 2.5 L9 0.5 L14 3.5 L9 6.5 L9 4.5 Q5 4.5 4 7Z" fill="#7ac240" stroke="#4a9020" stroke-width="0.6"/><path d="M14 8 Q13 13 7 12.5 L7 14.5 L2 11.5 L7 8.5 L7 10.5 Q11 10.5 12 8Z" fill="#6aa8e0" stroke="#3a78c0" stroke-width="0.6"/></svg>
<div class="a t" style="left:935.2px;top:578.99px;font-size:12.75px;line-height:15px;color:#000;font-weight:400;font-family:'Liberation Sans', sans-serif;transform:scaleX(1.015);transform-origin:0 0;">Sostituisci strutture disperdenti</div>
<svg class="a" style="left:1207px;top:584px;" width="8" height="5" viewBox="0 0 8 5"><path d="M0 0 H8 L4 4.5Z" fill="#000"/></svg>
<div class="a" style="left:906px;top:602px;width:315px;height:25px;border:1px solid #666666;box-sizing:border-box"></div>
<svg class="a" style="left:913px;top:606px;" width="17" height="16" viewBox="0 0 17 16"><rect x="3" y="0.5" width="5" height="4" fill="#fff" stroke="#4a7ad0"/><path d="M5.5 4.5 V8 H2.5 V10 M5.5 8 H9" stroke="#4a7ad0" fill="none"/><rect x="0.5" y="10" width="5" height="4.5" fill="#8ac840" stroke="#4a8a1a" stroke-width="0.8"/><circle cx="12" cy="11" r="3.5" fill="#b8c0d0" stroke="#6a7a90"/><circle cx="12" cy="11" r="1.3" fill="#fff"/></svg>
<div class="a t" style="left:935.2px;top:607.29px;font-size:12.75px;line-height:15px;color:#000;font-weight:400;font-family:'Liberation Sans', sans-serif;transform:scaleX(1.03);transform-origin:0 0;">Modifica multipla proprietà elementi</div>
<svg class="a" style="left:1207px;top:612px;" width="8" height="5" viewBox="0 0 8 5"><path d="M0 0 H8 L4 4.5Z" fill="#000"/></svg>
<div class="a" style="left:906px;top:630px;width:315px;height:63px;border:1px solid #666666;box-sizing:border-box"></div>
<svg class="a" style="left:913px;top:641px;" width="17" height="15" viewBox="0 0 17 15"><rect x="0.5" y="0.5" width="15" height="13" fill="#fff" stroke="#5a8ad0"/><rect x="0.5" y="0.5" width="15" height="3.5" fill="#a8c8f0" stroke="#5a8ad0"/><path d="M0.5 7 H15.5 M0.5 10.5 H15.5 M5.5 0.5 V13.5 M10.5 0.5 V13.5" stroke="#5a8ad0" stroke-width="0.9"/></svg>
<div class="a t" style="left:933.3px;top:640.99px;font-size:12.75px;line-height:15px;color:#000;font-weight:400;font-family:'Liberation Sans', sans-serif;transform:scaleX(1.025);transform-origin:0 0;">Riallinea archivi dei materiali</div>
<div class="a t" style="left:933.3px;top:659.00px;font-size:10px;line-height:12px;color:#000;font-weight:400;font-family:'Liberation Sans', sans-serif;transform:scaleX(0.985);transform-origin:0 0;">Permette di sincronizzare l'elenco dei materiali utilizzati per la</div>
<div class="a t" style="left:933.3px;top:670.90px;font-size:10px;line-height:12px;color:#000;font-weight:400;font-family:'Liberation Sans', sans-serif;transform:scaleX(0.985);transform-origin:0 0;">composizione delle stratigrafie con l'archivio di sistema</div>
<div class="a" style="left:906px;top:696px;width:179px;height:25px;border:1px solid #666666;box-sizing:border-box"></div>
<svg class="a" style="left:912px;top:699px;" width="16" height="18" viewBox="0 0 16 18"><rect x="0.5" y="0.5" width="11" height="14" rx="1" fill="#e86a5a" stroke="#b83a2a"/><rect x="2" y="2" width="8" height="2" fill="#f8b8a8"/><path d="M6 10 L10.5 8 L15 10 V15 L10.5 17 L6 15Z" fill="#f4b050" stroke="#c08030" stroke-width="0.7"/><path d="M6 10 L10.5 12 L15 10 M10.5 12 V17" stroke="#c08030" stroke-width="0.7" fill="none"/></svg>
<div class="a t" style="left:932.4px;top:701.29px;font-size:12.75px;line-height:15px;color:#000;font-weight:400;font-family:'Liberation Sans', sans-serif;transform:scaleX(1.01);transform-origin:0 0;">Copia struttura in archivio</div>
<div class="a" style="left:1088px;top:696px;width:133px;height:25px;border:1px solid #666666;box-sizing:border-box"></div>
<svg class="a" style="left:1094px;top:700px;" width="16" height="16" viewBox="0 0 16 16"><rect x="0.5" y="0.5" width="15" height="15" fill="#eef2fa" stroke="#5a7ab8"/><path d="M2 14 L14 2" stroke="#3a6ad0" stroke-width="0.9"/><path d="M2 6 Q7 8 14 14" stroke="#e04040" stroke-width="0.9" fill="none"/></svg>
<div class="a t" style="left:1114px;top:701.29px;font-size:12.75px;line-height:15px;color:#000;font-weight:400;font-family:'Liberation Sans', sans-serif;">Verifica condensa</div>
<div class="a" style="left:1px;top:893px;width:1264px;height:20px;background:#f0f0f0"></div>
<div class="a" style="left:1px;top:912px;width:1264px;height:1px;background:#a8a8a8"></div>
<div class="a" style="left:4px;top:894px;width:964px;height:17px;border-top:1px solid #a0a0a0;border-left:1px solid #a0a0a0;border-right:1px solid #fff;box-sizing:border-box"></div>
<div class="a" style="left:971px;top:894px;width:51px;height:17px;border-top:1px solid #a0a0a0;border-left:1px solid #a0a0a0;border-right:1px solid #fff;box-sizing:border-box"></div>
<div class="a t" style="left:974px;top:897.16px;font-size:11px;line-height:13px;color:#000;font-weight:400;font-family:'Liberation Sans', sans-serif;letter-spacing:0.35px;">v. 17.01c</div>
<div class="a" style="left:1025px;top:894px;width:156px;height:17px;border-top:1px solid #a0a0a0;border-left:1px solid #a0a0a0;border-right:1px solid #fff;box-sizing:border-box"></div>
<div class="a" style="left:1184px;top:894px;width:32px;height:17px;border-top:1px solid #a0a0a0;border-left:1px solid #a0a0a0;border-right:1px solid #fff;box-sizing:border-box"></div>
<div class="a t" style="left:1186px;top:897.16px;font-size:11px;line-height:13px;color:#a0a0a0;font-weight:400;font-family:'Liberation Sans', sans-serif;letter-spacing:0.35px;">MAIU</div>
<div class="a" style="left:1218px;top:894px;width:31px;height:17px;border-top:1px solid #a0a0a0;border-left:1px solid #a0a0a0;border-right:1px solid #fff;box-sizing:border-box"></div>
<div class="a t" style="left:1220.5px;top:897.16px;font-size:11px;line-height:13px;color:#000;font-weight:400;font-family:'Liberation Sans', sans-serif;letter-spacing:0.35px;">NUM</div>
<svg class="a" style="left:1250px;top:899px;" width="14" height="14" viewBox="0 0 14 14"><path d="M13 2 L2 13 M13 6 L6 13 M13 10 L10 13" stroke="#a0a0a0" stroke-width="1.2"/></svg>
</body></html>
